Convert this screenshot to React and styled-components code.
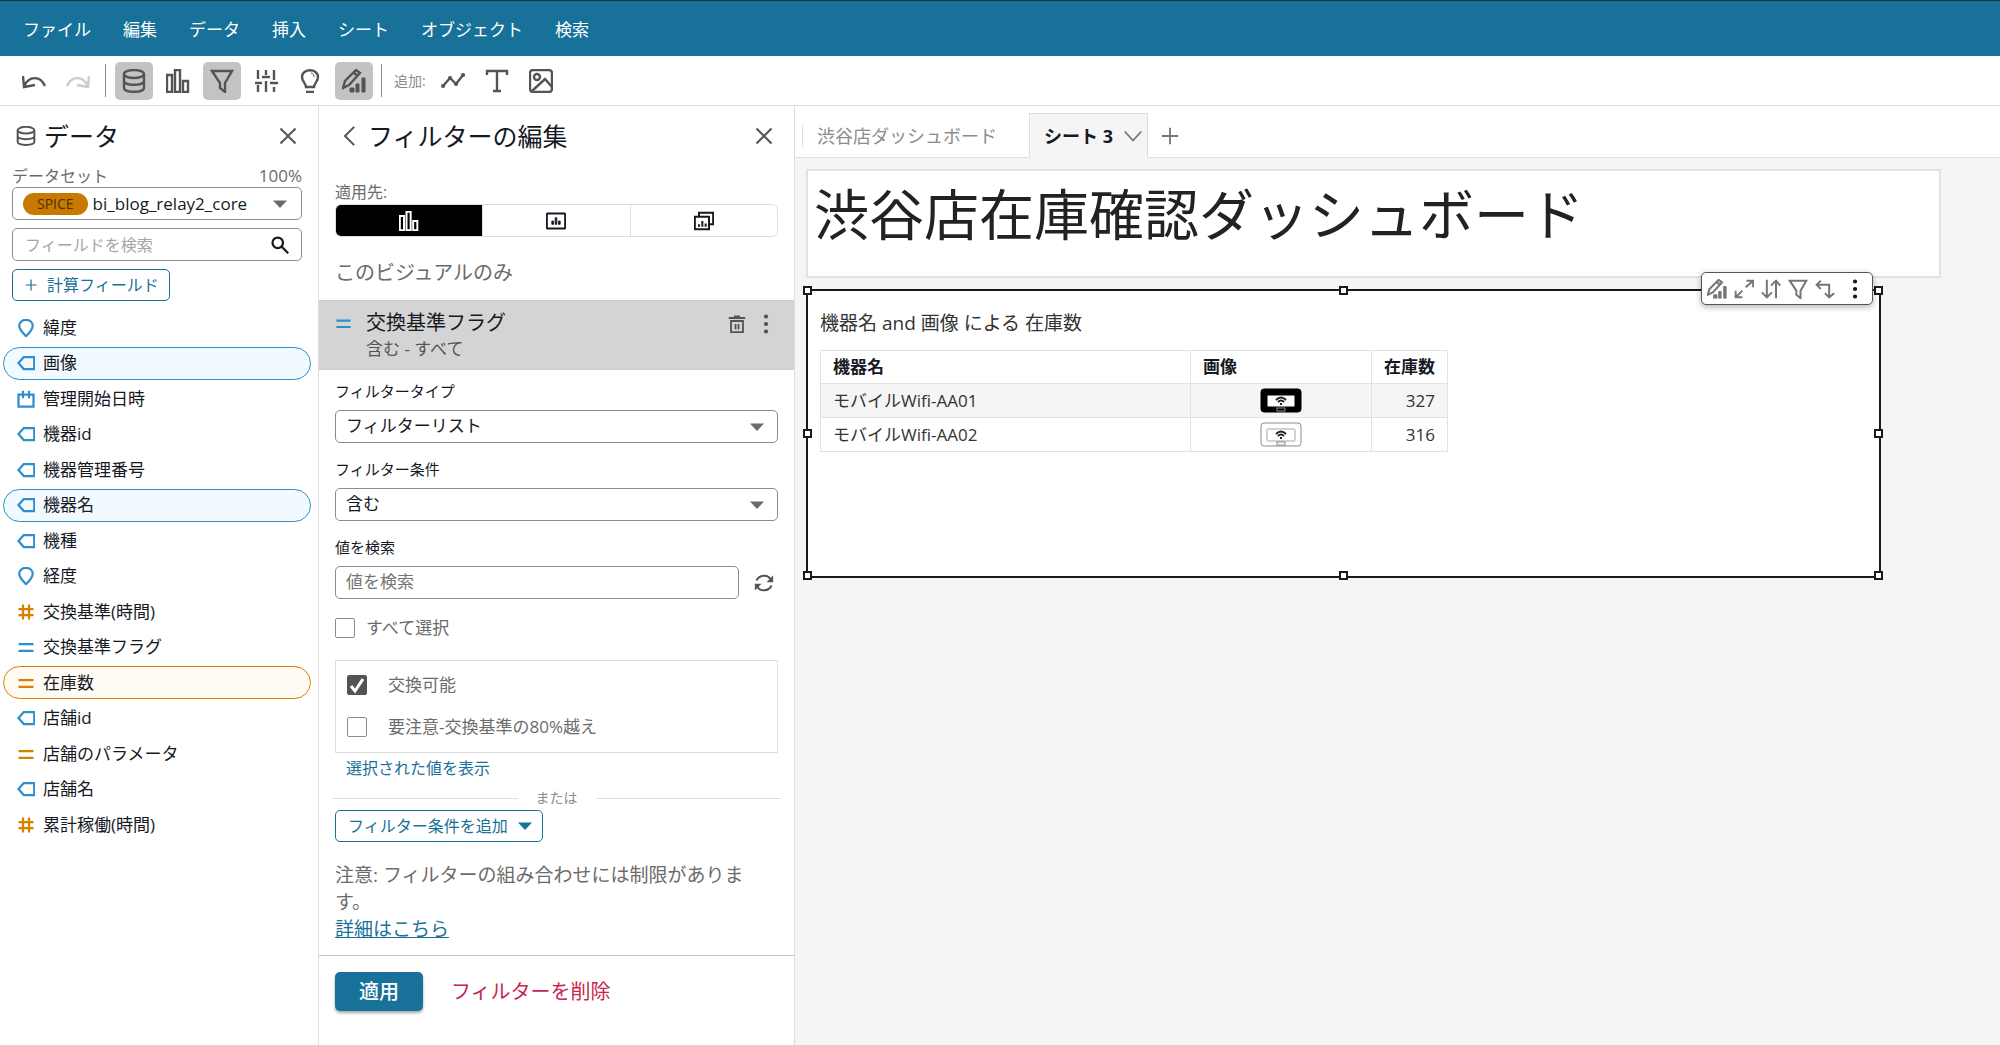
import React, { useState } from 'react';
import styled, { createGlobalStyle, css } from 'styled-components';

const GlobalStyle = createGlobalStyle`
  * {
    box-sizing: border-box;
  }

  body {
    margin: 0;
    background-color: #fff;
    color: #16191f;
    font-family: 'Open Sans', 'Noto Sans CJK JP', sans-serif;
    font-size: 17px;
    line-height: 24px;
  }

  button,
  input,
  select {
    font: inherit;
    color: inherit;
    margin: 0;
  }

  button {
    padding: 0;
    border: none;
    background: none;
    cursor: pointer;
  }

  svg {
    display: block;
    flex: none;
  }
`;

const Page = styled.div`
  display: flex;
  flex-direction: column;
  min-height: 100vh;
`;

const MenuBar = styled.nav`
  display: flex;
  align-items: center;
  gap: 32px;
  height: 56px;
  padding: 2px 23px 0;
  border-top: 1px solid #232f3e;
  background-color: #187199;
`;

const MenuItem = styled.button`
  color: #fff;
  white-space: nowrap;
`;

const Toolbar = styled.div`
  display: flex;
  align-items: center;
  gap: 6px;
  height: 50px;
  padding: 0 15px;
  border-bottom: 1px solid #dedede;
`;

const ToolButton = styled.button`
  display: flex;
  align-items: center;
  justify-content: center;
  width: 38px;
  height: 38px;
  border-radius: 5px;
  color: ${(props) => (props.disabled ? '#cccccc' : '#545454')};
  background-color: ${(props) => (props.$active ? '#c3c3c3' : 'transparent')};
`;

const ToolDivider = styled.span`
  width: 1px;
  height: 33px;
  margin: 0 3px 0 2px;
  background-color: #8c8c8c;
`;

const ToolLabel = styled.span`
  margin: 0 2px 0 3px;
  color: #8c8c8c;
  font-size: 14px;
`;

const Workspace = styled.div`
  display: flex;
  flex: 1;
`;

const Panel = styled.aside`
  flex: none;
  width: ${(props) => props.$width};
  border-right: 1px solid #dedede;
`;

const PanelHeader = styled.header`
  display: flex;
  align-items: center;
  gap: 8px;
  height: 60px;
  padding: 0 20px 0 ${(props) => props.$left};
  color: #545454;
`;

const PanelTitle = styled.h2`
  flex: 1;
  margin: 0;
  color: #16191f;
  font-size: 25px;
  font-weight: 400;
  line-height: 32px;
`;

const IconButton = styled.button`
  display: flex;
  align-items: center;
  color: #545454;
`;

const DataBody = styled.div`
  padding: 0 16px 0 12px;
`;

const DatasetCaption = styled.div`
  display: flex;
  justify-content: space-between;
  height: 21px;
  line-height: 20px;
  color: #6b6b6b;

  label {
    font-size: 16px;
  }
`;

const boxed = css`
  height: 33px;
  border: 1px solid #8c8c8c;
  border-radius: 5px;
  background-color: #fff;
`;

const DatasetBox = styled.div`
  ${boxed}
  display: flex;
  align-items: center;
  gap: 5px;
  padding: 0 14px 0 10px;
  color: #6b6b6b;
`;

const SpiceBadge = styled.span`
  padding: 0 14px;
  border-radius: 11px;
  background-color: #c97800;
  color: #4a3209;
  font-size: 14px;
  line-height: 22px;
`;

const DatasetSelect = styled.select`
  flex: 1;
  min-width: 0;
  border: none;
  background: none;
  color: #16191f;
  appearance: none;
`;

const SearchBox = styled.div`
  ${boxed}
  display: flex;
  align-items: center;
  margin-top: 8px;
  padding: 0 12px;
`;

const SearchInput = styled.input`
  flex: 1;
  min-width: 0;
  padding: 0;
  border: none;
  background: none;
  font-size: 16px;

  &::placeholder {
    color: #a6a6a6;
    opacity: 1;
  }
`;

const OutlineButton = styled.button`
  display: flex;
  align-items: center;
  gap: 10px;
  height: 32px;
  padding: 0 10px 0 12px;
  border: 1px solid #187199;
  border-radius: 5px;
  color: #187199;
  font-size: 16px;
`;

const CalcRow = styled.div`
  display: flex;
  margin-top: 8px;
`;

const FieldList = styled.ul`
  display: flex;
  flex-direction: column;
  justify-content: space-between;
  height: 530px;
  margin: 10px 7px 0 3px;
  padding: 0;
  list-style: none;
`;

const FieldItem = styled.li`
  display: flex;
  align-items: center;
  gap: 8px;
  height: 33px;
  padding: 0 13px;
  border: 1px solid ${(props) => (props.$selected ? props.$color : 'transparent')};
  border-radius: 17px;
  background-color: ${(props) => (props.$selected ? props.$tint : 'transparent')};

  svg {
    color: ${(props) => props.$color};
  }
`;

const FilterSection = styled.div`
  padding: 0 16px;
`;

const Caption = styled.div`
  margin-top: 14px;
  color: #6b6b6b;
  font-size: 16px;
`;

const Segments = styled.div`
  display: flex;
  height: 33px;
  border: 1px solid #dedede;
  border-radius: 6px;
  overflow: hidden;
`;

const Segment = styled.button`
  display: flex;
  flex: 1;
  align-items: center;
  justify-content: center;
  color: ${(props) => (props.$active ? '#fff' : '#16191f')};
  background-color: ${(props) => (props.$active ? '#000' : '#fff')};

  & + & {
    border-left: 1px solid #dedede;
  }
`;

const ScopeText = styled.p`
  margin: 22px 0 13px;
  color: #6b6b6b;
  font-size: 20px;
  line-height: 28px;
`;

const FilterCard = styled.div`
  display: flex;
  gap: 14px;
  height: 70px;
  padding: 8px 18px 8px 16px;
  border-top: 1px solid #cccccc;
  border-bottom: 1px solid #cccccc;
  background-color: #d4d4d4;
  color: #545454;
`;

const FilterCardText = styled.div`
  flex: 1;
`;

const FilterCardTitle = styled.div`
  color: #16191f;
  font-size: 20px;
  line-height: 28px;
`;

const CardIcon = styled.div`
  display: flex;
  align-items: center;
  height: 28px;
  color: #2e8fcb;
`;

const CardActions = styled.div`
  display: flex;
  gap: 10px;
  height: 30px;
`;

const Field = styled.div`
  display: flex;
  flex-direction: column;
  gap: 8px;
  margin-bottom: 15px;
`;

const Fields = styled.div`
  margin-top: 10px;
`;

const FieldLabel = styled.label`
  font-size: 15px;
  line-height: 22px;
`;

const SelectWrap = styled.div`
  display: grid;
  align-items: center;
  color: #6b6b6b;

  > * {
    grid-area: 1 / 1;
  }

  > svg {
    justify-self: end;
    margin-right: 14px;
    pointer-events: none;
  }
`;

const Select = styled.select`
  ${boxed}
  width: 100%;
  padding: 0 36px 2px 10px;
  color: #16191f;
  appearance: none;
`;

const ValueRow = styled.div`
  display: flex;
  align-items: center;
  gap: 15px;
  padding-right: 4px;
`;

const ValueInput = styled.input`
  ${boxed}
  flex: 1;
  min-width: 0;
  padding: 0 10px 2px;

  &::placeholder {
    color: #757575;
    opacity: 1;
  }
`;

const CheckLabel = styled.label`
  display: flex;
  align-items: center;
  gap: ${(props) => props.$gap};
  height: ${(props) => props.$height};
  color: #6b6b6b;
`;

const Checkbox = styled.input`
  flex: none;
  width: 20px;
  height: 20px;
  border: 1px solid #8c8c8c;
  border-radius: 2px;
  background-color: #fff;
  appearance: none;

  &:checked {
    border-color: #545454;
    background: #545454
      url("data:image/svg+xml,%3Csvg xmlns='http://www.w3.org/2000/svg' viewBox='0 0 18 18'%3E%3Cpath d='M3 10l4 5 8-12' fill='none' stroke='white' stroke-width='3'/%3E%3C/svg%3E")
      center / 18px no-repeat;
  }
`;

const ValueList = styled.div`
  margin-top: 18px;
  padding: 3px 11px 4px;
  border: 1px solid #dedede;
`;

const Link = styled.a`
  color: #187199;
  text-decoration: ${(props) => (props.$underline ? 'underline' : 'none')};
`;

const SelectedRow = styled.div`
  margin: 3px 0 8px;
  padding-left: 11px;
  font-size: 16px;
`;

const OrDivider = styled.div`
  display: flex;
  align-items: center;
  gap: 18px;
  margin: 0 -3px 2px;
  color: #8c8c8c;
  font-size: 14px;
  line-height: 20px;

  &::before,
  &::after {
    content: '';
    flex: 1;
    height: 1px;
    background-color: #dedede;
  }
`;

const Note = styled.p`
  margin: 20px 0 12px;
  color: #6b6b6b;
  font-size: 19px;
  line-height: 27px;
`;

const FilterFooter = styled.footer`
  display: flex;
  align-items: center;
  gap: 28px;
  padding: 16px;
  border-top: 1px solid #c3c3c3;
  font-size: 20px;
`;

const ApplyButton = styled.button`
  width: 88px;
  height: 39px;
  border-radius: 5px;
  background-color: #187199;
  box-shadow: 0 2px 3px rgba(0, 0, 0, 0.35);
  color: #fff;
  font-weight: 500;
`;

const DeleteButton = styled.button`
  color: #c7254e;
`;

const Main = styled.main`
  flex: 1;
  min-width: 0;
  background-color: #f5f5f5;
`;

const TabBar = styled.div`
  display: flex;
  align-items: flex-end;
  height: 52px;
  padding-left: 7px;
  background-color: #fff;
  box-shadow: inset 0 -1px #dedede;
`;

const Tab = styled.button`
  height: 44px;
  padding: 0 32px 0 14px;
  color: #8c8c8c;
  font-size: 18px;
`;

const TabRule = styled.span`
  width: 1px;
  height: 22px;
  margin-bottom: 11px;
  background-color: #dedede;
`;

const ActiveTab = styled.button`
  display: flex;
  align-items: center;
  gap: 11px;
  height: 45px;
  padding: 0 5px 0 14px;
  border: 1px solid #dedede;
  border-bottom: none;
  background-color: #f5f5f5;
  font-size: 18px;
  font-weight: 700;

  svg {
    color: #757575;
  }
`;

const AddTab = styled.button`
  display: flex;
  align-items: center;
  height: 44px;
  padding: 0 13px;
  color: #757575;
`;

const Sheet = styled.div`
  display: flex;
  flex-direction: column;
  gap: 11px;
  padding: 11px 59px 0 11px;
`;

const TitleBox = styled.section`
  height: 109px;
  padding: 8px 6px;
  border: 2px solid #e2e2e2;
  background-color: #fff;
`;

const SheetTitle = styled.h1`
  margin: 0;
  color: #222;
  font-size: 55px;
  font-weight: 400;
  line-height: 70px;
  white-space: nowrap;
`;

const Visual = styled.section`
  position: relative;
  height: 289px;
  margin-right: 60px;
  padding: 18px 12px;
  border: 2px solid #1a1a1a;
  background-color: #fff;
`;

const VisualTitle = styled.h3`
  margin: 0 0 13px;
  color: #333;
  font-size: 19px;
  font-weight: 400;
  line-height: 28px;
`;

const Handle = styled.span`
  position: absolute;
  left: ${(props) => props.$x};
  top: ${(props) => props.$y};
  width: 9px;
  height: 9px;
  margin: -5px;
  border: 2px solid #1a1a1a;
  background-color: #fff;
`;

const VisualMenu = styled.div`
  position: absolute;
  top: -19px;
  right: 6px;
  display: flex;
  align-items: center;
  gap: 7px;
  height: 33px;
  padding: 0 7px 0 5px;
  border: 1px solid #545454;
  border-radius: 5px;
  background-color: #fff;
  box-shadow: 0 2px 6px rgba(0, 0, 0, 0.3);

  button {
    color: #757575;
  }

  button:last-child {
    margin-left: 3px;
    color: #16191f;
  }
`;

const DataTable = styled.table`
  border-collapse: collapse;
  table-layout: fixed;
  width: 628px;
  color: #333;

  th,
  td {
    height: 34px;
    padding: 0 12px;
    border: 1px solid #e2e2e2;
    line-height: 24px;
    text-align: left;
  }

  th {
    height: 33px;
    color: #16191f;
    font-weight: 700;
  }

  th:last-child,
  td:last-child {
    text-align: right;
  }

  td svg {
    margin: 0 auto;
  }

  tbody tr:nth-child(odd) {
    background-color: #f5f5f5;
  }
`;

const NameCol = styled.col`
  width: 370px;
`;

const ImageCol = styled.col`
  width: 181px;
`;

const paths = {
  undo: <path d="M1 7l1 11 11-2M2 17C7 7 18 6 23 17" />,
  redo: <path d="M23 7l-1 11-11-2M22 17C17 7 6 6 1 17" />,
  database: (
    <>
      <ellipse cx="12" cy="5" rx="10" ry="4" />
      <path d="M2 5v14c0 5 20 5 20 0V5M2 12c0 5 20 5 20 0" />
    </>
  ),
  bars: <path d="M1 6h5v17H1zM9 1h5v22H9zM17 12h5v11h-5z" />,
  filter: <path d="M2 2h20l-7 12v9l-5-4v-5z" />,
  sliders: (
    <path d="M4 1v9M4 16v7M1 14h7M12 1v5M8 8h8M12 12v11M20 1v10M20 18v5M16 14h8" />
  ),
  bulb: (
    <>
      <path d="M8 18C8 14 4 13 4 8c0-9 16-9 16 0 0 5-4 6-4 10zM8 23h8" />
      <path d="M13 4c2 0 3 2 3 4" strokeWidth="1" />
    </>
  ),
  edit: (
    <>
      <path d="M1 19l2-7L14 1l4 3L7 16zM12 4l4 3" />
      <path d="M8 19h4v4H8zM14 15h3v8h-3zM20 9h3v14h-3z" fill="currentColor" strokeWidth="1" />
    </>
  ),
  line: (
    <>
      <path d="M2 17l7-8 6 6 7-9" />
      <path d="M2 17h.1M9 9h.1M15 15h.1M22 6h.1" strokeWidth="4" strokeLinecap="round" />
    </>
  ),
  text: <path d="M2 6V2h20v4M12 2v20M8 22h8" />,
  image: (
    <>
      <rect x="1" y="1" width="22" height="22" rx="3" />
      <circle cx="8" cy="8" r="3" />
      <path d="M3 22L16 10l7 8" />
    </>
  ),
  close: <path d="M3 3l18 18M21 3L3 21" />,
  back: <path d="M17 1L6 12l11 11" />,
  down: <path d="M1 6l11 12L23 6" />,
  plus: <path d="M12 1v22M1 12h22" />,
  caret: <path d="M0 6h24L12 19z" fill="currentColor" stroke="none" />,
  search: (
    <>
      <circle cx="9" cy="9" r="7" />
      <path d="M14 14l9 9" />
    </>
  ),
  geo: <path d="M12 23C7 18 3 14 3 9a9 8 0 0118 0c0 5-4 9-9 14z" />,
  tag: <path d="M9 4h14v16H9l-7-8z" />,
  date: <path d="M2 6h20v16H2zM8 1v10M16 1v10" />,
  number: <path d="M8 2v20M16 2v20M2 8h20M2 16h20" />,
  equal: <path d="M2 8h20M2 17h20" />,
  trash: <path d="M1 4h22M8 2h8M4 8h16v15H4zM10 12v7M14 12v7" />,
  dots: (
    <path d="M12 3h.1M12 12h.1M12 21h.1" strokeWidth="5" strokeLinecap="round" />
  ),
  refresh: (
    <>
      <path d="M3 9C6 2 17 1 20 8M21 15c-3 7-14 8-17 1" />
      <path d="M23 3v8h-8zM1 21v-8h8z" fill="currentColor" stroke="none" />
    </>
  ),
  sheet: (
    <>
      <rect x="1" y="3" width="22" height="18" rx="1" />
      <path d="M7 12h2v4H7zM11 8h2v8h-2zM15 12h2v4h-2z" fill="currentColor" strokeWidth="1" />
    </>
  ),
  sheets: (
    <>
      <path d="M1 7h17v15H1zM6 7V2h17v14h-5" />
      <path d="M6 16v3M10 12v7M14 15v4" />
    </>
  ),
  expand: <path d="M14 10l9-8M15 2h8v8M10 14l-8 8M2 14v8h8" />,
  sort: <path d="M7 1v21M1 16l6 6 6-6M18 23V2M12 8l6-6 5 6" />,
  swap: <path d="M7 2L2 7l5 5M2 7h15v15M12 17l5 5 6-5" />,
};

function Icon({ name, size = 24, stroke = 2.4 }) {
  return (
    <svg
      width={size}
      height={size}
      viewBox="0 0 24 24"
      fill="none"
      stroke="currentColor"
      strokeWidth={stroke}
      aria-hidden="true"
    >
      {paths[name]}
    </svg>
  );
}

function RouterPicture({ dark }) {
  const body = dark ? '#000' : '#fff';
  const edge = dark ? '#000' : '#8c8c8c';
  return (
    <svg width="42" height="25" viewBox="0 0 42 25" role="img" aria-label="モバイルWifi">
      <rect x="1" y="1" width="40" height="23" rx="3" fill={body} stroke={edge} />
      <rect x="7" y="7" width="28" height="12" rx="1" fill="#fff" stroke={dark ? '#000' : '#a6a6a6'} />
      <path
        d="M16 12q5-5 10 0M18 14q3-3 6 0M20 16h2"
        fill="none"
        stroke="#222"
        strokeWidth="2"
      />
      <rect x="17" y="20" width="8" height="3" fill="none" stroke="#8c8c8c" />
    </svg>
  );
}

const BLUE = '#2e8fcb';
const ORANGE = '#d68100';

const menus = ['ファイル', '編集', 'データ', '挿入', 'シート', 'オブジェクト', '検索'];

const fields = [
  { name: '緯度', icon: 'geo' },
  { name: '画像', icon: 'tag', selected: true },
  { name: '管理開始日時', icon: 'date' },
  { name: '機器id', icon: 'tag' },
  { name: '機器管理番号', icon: 'tag' },
  { name: '機器名', icon: 'tag', selected: true },
  { name: '機種', icon: 'tag' },
  { name: '経度', icon: 'geo' },
  { name: '交換基準(時間)', icon: 'number', measure: true },
  { name: '交換基準フラグ', icon: 'equal' },
  { name: '在庫数', icon: 'equal', measure: true, selected: true },
  { name: '店舗id', icon: 'tag' },
  { name: '店舗のパラメータ', icon: 'equal', measure: true },
  { name: '店舗名', icon: 'tag' },
  { name: '累計稼働(時間)', icon: 'number', measure: true },
];

const rows = [
  { name: 'モバイルWifi-AA01', dark: true, stock: 327 },
  { name: 'モバイルWifi-AA02', dark: false, stock: 316 },
];

const handles = [
  ['0%', '0%'],
  ['50%', '0%'],
  ['100%', '0%'],
  ['0%', '50%'],
  ['100%', '50%'],
  ['0%', '100%'],
  ['50%', '100%'],
  ['100%', '100%'],
];

function TopToolbar() {
  return (
    <Toolbar>
      <ToolButton aria-label="元に戻す"><Icon name="undo" /></ToolButton>
      <ToolButton aria-label="やり直す" disabled><Icon name="redo" /></ToolButton>
      <ToolDivider />
      <ToolButton aria-label="データ" $active><Icon name="database" /></ToolButton>
      <ToolButton aria-label="ビジュアル"><Icon name="bars" /></ToolButton>
      <ToolButton aria-label="フィルター" $active><Icon name="filter" /></ToolButton>
      <ToolButton aria-label="パラメータ"><Icon name="sliders" /></ToolButton>
      <ToolButton aria-label="インサイト"><Icon name="bulb" /></ToolButton>
      <ToolButton aria-label="プロパティ" $active><Icon name="edit" /></ToolButton>
      <ToolDivider />
      <ToolLabel>追加:</ToolLabel>
      <ToolButton aria-label="ビジュアルを追加"><Icon name="line" /></ToolButton>
      <ToolButton aria-label="テキストを追加"><Icon name="text" /></ToolButton>
      <ToolButton aria-label="画像を追加"><Icon name="image" /></ToolButton>
    </Toolbar>
  );
}

function DataPanel() {
  return (
    <Panel $width="319px">
      <PanelHeader $left="16px">
        <Icon name="database" size={20} />
        <PanelTitle>データ</PanelTitle>
        <IconButton aria-label="閉じる"><Icon name="close" size={20} /></IconButton>
      </PanelHeader>
      <DataBody>
        <DatasetCaption>
          <label htmlFor="dataset">データセット</label>
          <span>100%</span>
        </DatasetCaption>
        <DatasetBox>
          <SpiceBadge>SPICE</SpiceBadge>
          <DatasetSelect id="dataset">
            <option>bi_blog_relay2_core</option>
          </DatasetSelect>
          <Icon name="caret" size={14} />
        </DatasetBox>
        <SearchBox>
          <SearchInput aria-label="フィールドを検索" placeholder="フィールドを検索" />
          <Icon name="search" size={18} stroke={3} />
        </SearchBox>
        <CalcRow>
          <OutlineButton>
            <Icon name="plus" size={12} />
            計算フィールド
          </OutlineButton>
        </CalcRow>
      </DataBody>
      <FieldList>
        {fields.map((field) => (
          <FieldItem
            key={field.name}
            $selected={field.selected}
            $color={field.measure ? ORANGE : BLUE}
            $tint={field.measure ? '#fffaf2' : '#f2faff'}
          >
            <Icon name={field.icon} size={18} stroke={3} />
            {field.name}
          </FieldItem>
        ))}
      </FieldList>
    </Panel>
  );
}

function FilterPanel() {
  const [available, setAvailable] = useState(true);

  return (
    <Panel $width="476px">
      <PanelHeader $left="21px">
        <IconButton aria-label="戻る"><Icon name="back" size={20} /></IconButton>
        <PanelTitle>フィルターの編集</PanelTitle>
        <IconButton aria-label="閉じる"><Icon name="close" size={20} /></IconButton>
      </PanelHeader>
      <FilterSection>
        <Caption>適用先:</Caption>
        <Segments>
          <Segment $active aria-label="このビジュアル"><Icon name="bars" size={20} /></Segment>
          <Segment aria-label="このシート"><Icon name="sheet" size={20} /></Segment>
          <Segment aria-label="すべてのシート"><Icon name="sheets" size={20} /></Segment>
        </Segments>
        <ScopeText>このビジュアルのみ</ScopeText>
      </FilterSection>
      <FilterCard>
        <CardIcon><Icon name="equal" size={17} stroke={3} /></CardIcon>
        <FilterCardText>
          <FilterCardTitle>交換基準フラグ</FilterCardTitle>
          含む - すべて
        </FilterCardText>
        <CardActions>
          <IconButton aria-label="削除"><Icon name="trash" size={18} /></IconButton>
          <IconButton aria-label="メニュー"><Icon name="dots" size={20} /></IconButton>
        </CardActions>
      </FilterCard>
      <FilterSection>
        <Fields>
          <Field>
            <FieldLabel htmlFor="filter-type">フィルタータイプ</FieldLabel>
            <SelectWrap>
              <Select id="filter-type"><option>フィルターリスト</option></Select>
              <Icon name="caret" size={14} />
            </SelectWrap>
          </Field>
          <Field>
            <FieldLabel htmlFor="filter-condition">フィルター条件</FieldLabel>
            <SelectWrap>
              <Select id="filter-condition"><option>含む</option></Select>
              <Icon name="caret" size={14} />
            </SelectWrap>
          </Field>
          <Field>
            <FieldLabel htmlFor="filter-value">値を検索</FieldLabel>
            <ValueRow>
              <ValueInput id="filter-value" placeholder="値を検索" />
              <IconButton aria-label="更新"><Icon name="refresh" size={20} /></IconButton>
            </ValueRow>
          </Field>
        </Fields>
        <CheckLabel $gap="11px" $height="28px">
          <Checkbox type="checkbox" />
          すべて選択
        </CheckLabel>
        <ValueList>
          <CheckLabel $gap="21px" $height="42px">
            <Checkbox
              type="checkbox"
              checked={available}
              onChange={(e) => setAvailable(e.target.checked)}
            />
            交換可能
          </CheckLabel>
          <CheckLabel $gap="21px" $height="42px">
            <Checkbox type="checkbox" />
            要注意-交換基準の80%越え
          </CheckLabel>
        </ValueList>
        <SelectedRow><Link href="#selected">選択された値を表示</Link></SelectedRow>
        <OrDivider>または</OrDivider>
        <OutlineButton>
          フィルター条件を追加
          <Icon name="caret" size={14} />
        </OutlineButton>
        <Note>
          注意: フィルターの組み合わせには制限があります。
          <br />
          <Link href="#details" $underline>詳細はこちら</Link>
        </Note>
      </FilterSection>
      <FilterFooter>
        <ApplyButton>適用</ApplyButton>
        <DeleteButton>フィルターを削除</DeleteButton>
      </FilterFooter>
    </Panel>
  );
}

function StockVisual() {
  return (
    <Visual>
      <VisualTitle>機器名 and 画像 による 在庫数</VisualTitle>
      <DataTable>
        <colgroup>
          <NameCol />
          <ImageCol />
          <col />
        </colgroup>
        <thead>
          <tr>
            <th>機器名</th>
            <th>画像</th>
            <th>在庫数</th>
          </tr>
        </thead>
        <tbody>
          {rows.map((row) => (
            <tr key={row.name}>
              <td>{row.name}</td>
              <td><RouterPicture dark={row.dark} /></td>
              <td>{row.stock}</td>
            </tr>
          ))}
        </tbody>
      </DataTable>
      {handles.map(([x, y]) => (
        <Handle key={x + y} $x={x} $y={y} />
      ))}
      <VisualMenu>
        <IconButton aria-label="編集"><Icon name="edit" size={20} /></IconButton>
        <IconButton aria-label="拡大"><Icon name="expand" size={20} /></IconButton>
        <IconButton aria-label="並べ替え"><Icon name="sort" size={20} /></IconButton>
        <IconButton aria-label="フィルター"><Icon name="filter" size={20} /></IconButton>
        <IconButton aria-label="入れ替え"><Icon name="swap" size={20} /></IconButton>
        <IconButton aria-label="メニュー"><Icon name="dots" size={20} /></IconButton>
      </VisualMenu>
    </Visual>
  );
}

function App() {
  return (
    <Page>
      <GlobalStyle />
      <MenuBar>
        {menus.map((menu) => (
          <MenuItem key={menu}>{menu}</MenuItem>
        ))}
      </MenuBar>
      <TopToolbar />
      <Workspace>
        <DataPanel />
        <FilterPanel />
        <Main>
          <TabBar>
            <TabRule />
            <Tab>渋谷店ダッシュボード</Tab>
            <ActiveTab>
              シート 3
              <Icon name="down" size={18} />
            </ActiveTab>
            <AddTab aria-label="シートを追加"><Icon name="plus" size={18} /></AddTab>
          </TabBar>
          <Sheet>
            <TitleBox>
              <SheetTitle>渋谷店在庫確認ダッシュボード</SheetTitle>
            </TitleBox>
            <StockVisual />
          </Sheet>
        </Main>
      </Workspace>
    </Page>
  );
}

export default App;
